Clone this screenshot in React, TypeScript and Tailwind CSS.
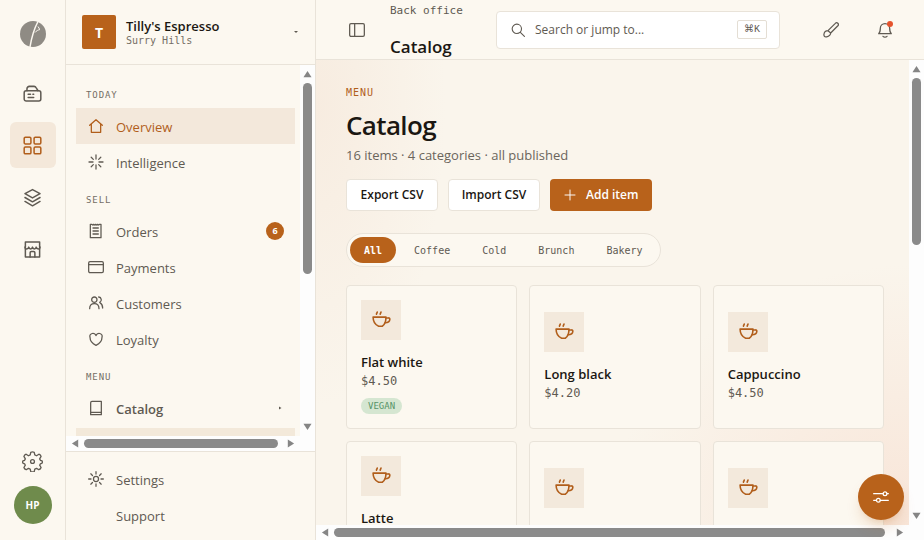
import { useState } from 'react';
import type { ReactNode } from 'react';

type IconProps = { children: ReactNode; className?: string };

function Icon({ children, className = 'size-4' }: IconProps) {
  return (
    <svg
      viewBox="0 0 24 24"
      fill="none"
      stroke="currentColor"
      strokeWidth="1.9"
      strokeLinecap="round"
      strokeLinejoin="round"
      aria-hidden="true"
      className={`shrink-0 ${className}`}
    >
      {children}
    </svg>
  );
}

const icons = {
  register: (
    <>
      <path d="M5 8.500V6a3 3 0 0 1 3-3h6a3 3 0 0 1 2.500 1.500l2.500 4" />
      <rect x="1.500" y="8.500" width="21" height="13" rx="2.500" />
      <path d="M6.500 13h3M6.500 17h7M12.500 13h1" />
    </>
  ),
  grid: (
    <>
      <rect x="1.500" y="1.500" width="8.500" height="8.500" rx="1.500" />
      <rect x="14" y="1.500" width="8.500" height="8.500" rx="1.500" />
      <rect x="1.500" y="14" width="8.500" height="8.500" rx="1.500" />
      <rect x="14" y="14" width="8.500" height="8.500" rx="1.500" />
    </>
  ),
  layers: (
    <>
      <path d="m12 2 9.500 5L12 12.500 2.500 7z" />
      <path d="m2.500 12 9.500 5.500 9.500-5.500" />
      <path d="m2.500 17 9.500 5.500 9.500-5.500" />
    </>
  ),
  store: (
    <>
      <path d="M3 11v10.500h18V11M3 2.500h18v7M3 2.500v7" />
      <path d="M2.500 9c0 3 4.300 3 4.800 0 .5 3 4.200 3 4.700 0 .5 3 4.200 3 4.700 0 .5 3 4.800 3 4.800 0M9 21.500V16a1.500 1.500 0 0 1 1.500-1.500h3A1.500 1.500 0 0 1 15 16v5.500" />
    </>
  ),
  gear: (
    <g strokeWidth="1.500">
      <path d="M10 1.500q2-.8 4 0l.6 3 2 .9 2.700-1.700q2 .7 2.500 2.500l-1.600 2.800.8 1.600 2 .8q.6 1.200 0 2.400l-2 .8-.8 1.600 1.600 2.700q-.6 1.900-2.500 2.500l-2.700-1.600-2 .8-.6 3q-2 .8-4 0l-.6-3-2-.8-2.700 1.600q-1.900-.6-2.500-2.500l1.600-2.700-.8-1.600-2-.8q-.6-1.200 0-2.400l2-.8.8-1.600-1.600-2.800q.6-1.900 2.500-2.500l2.700 1.700 2-.9z" />
      <circle cx="12" cy="12" r="2.200" />
    </g>
  ),
  home: <path d="M2.500 11 12 2.500l9.500 8.500M5 9v12.500h14V9" />,
  spark: <path d="M12 1.500v6M12 16.500v6M1.500 12h6M16.500 12h6M4.800 4.800l3.200 3.200M16 16l3.200 3.200M19.200 4.800 16 8M8 16l-3.200 3.200" />,
  receipt: (
    <>
      <path d="M3.500 2h2L7 3l1.500-1L10 3l1.500-1L13 3l1.500-1L16 3l1.500-1h2v20h-16z" />
      <path d="M7.500 7.500h8M7.500 12h8M7.500 16.500h8" />
    </>
  ),
  card: (
    <>
      <rect x="1" y="4" width="22" height="16.500" rx="2" />
      <path d="M1 8.500h22" />
    </>
  ),
  people: (
    <>
      <circle cx="9.500" cy="7" r="4" />
      <path d="M2.500 20.500c0-5 2.500-7.500 7-7.500s7 2.500 7 7.500M16 3a4.200 4.200 0 0 1 1.500 8c2.500 1.500 4.500 4.500 4.500 8.500" />
    </>
  ),
  heart: <path d="M12 21.500C5.500 18.500 3 14 3 9.500A4.500 4.500 0 0 1 12 7a4.500 4.500 0 0 1 9 2.500c0 4.500-2.500 9-9 12z" />,
  book: (
    <>
      <path d="M4 22V4a2 2 0 0 1 2-2h14v20H4z" />
      <path d="M4 18.500h16" />
    </>
  ),
  sun: (
    <>
      <circle cx="12" cy="12" r="3.800" />
      <path d="M12 1v3.500M12 19.500V23M1 12h3.500M19.500 12H23M4.200 4.200l2.500 2.500M17.300 17.300l2.500 2.500M19.800 4.200l-2.500 2.500M6.700 17.300l-2.500 2.500" />
    </>
  ),
  cup: (
    <>
      <path d="M2.500 8.500H18c0 5.500-1.800 9.500-4.500 11H9.200C5.500 18 2.500 14 2.500 8.500z" />
      <path d="M18 9.500h3a1.600 1.600 0 0 1 1.600 1.800c-.2 2.700-2 4-5.600 4M6.500 5l1-2.500M11 5l1-2.500" />
    </>
  ),
  panel: (
    <>
      <rect x="1" y="2.500" width="22" height="19" rx="2" />
      <path d="M8.500 2.500v19" />
    </>
  ),
  search: (
    <>
      <circle cx="10" cy="10" r="8" />
      <path d="m16 16 7 7" />
    </>
  ),
  brush: (
    <path d="M7.500 13 18.500 2a2.600 2.600 0 0 1 3.800 3.600L11.500 16.500M7.500 13l4 3.500M7.500 13c-3 0-5.500 2-6 5-.6 3 1 5 4 4.200 3.500-.8 5.800-3 6-5.700" />
  ),
  bell: (
    <>
      <path d="M2.500 17.500c2-1.500 2.500-3 2.500-8a7 7 0 0 1 14 0c0 5 .5 6.500 2.500 8z" />
      <path d="M9 21.500c1.500 1.600 4.500 1.600 6 0" />
    </>
  ),
  plus: <path d="M12 2v20M2 12h20" />,
  sliders: (
    <>
      <path d="M1 7h14M21 7h2M1 17h4M11 17h12" />
      <circle cx="18" cy="7" r="2.800" />
      <circle cx="8" cy="17" r="2.800" />
    </>
  ),
};

type IconName = keyof typeof icons;

const railItems: { label: string; icon: IconName; active?: boolean }[] = [
  { label: 'Register', icon: 'register' },
  { label: 'Back office', icon: 'grid', active: true },
  { label: 'Stock', icon: 'layers' },
  { label: 'Store', icon: 'store' },
];

const navGroups: { title: string; items: { label: string; icon: IconName; count?: number }[] }[] = [
  {
    title: 'TODAY',
    items: [
      { label: 'Overview', icon: 'home' },
      { label: 'Intelligence', icon: 'spark' },
    ],
  },
  {
    title: 'SELL',
    items: [
      { label: 'Orders', icon: 'receipt', count: 6 },
      { label: 'Payments', icon: 'card' },
      { label: 'Customers', icon: 'people' },
      { label: 'Loyalty', icon: 'heart' },
    ],
  },
  { title: 'MENU', items: [{ label: 'Catalog', icon: 'book' }] },
];

const categories = ['All', 'Coffee', 'Cold', 'Brunch', 'Bakery'];

const products = [
  { name: 'Flat white', price: '$4.50', tag: 'VEGAN' },
  { name: 'Long black', price: '$4.20' },
  { name: 'Cappuccino', price: '$4.50' },
  { name: 'Latte', price: '$4.80', tag: 'VEGAN' },
  { name: 'Piccolo', price: '$4.20' },
  { name: 'Mocha', price: '$5.20' },
];

const arrowPaths = {
  up: 'M5 1 9.500 8h-9z',
  down: 'M5 9 .5 2h9z',
  left: 'M1 5 8 .5v9z',
  right: 'M9 5 2 .5v9z',
};

function Arrow({ dir }: { dir: keyof typeof arrowPaths }) {
  return (
    <svg viewBox="0 0 10 10" className="size-[9px] shrink-0" aria-hidden="true">
      <path d={arrowPaths[dir]} fill="#858585" />
    </svg>
  );
}

// thumb is the share of the track that it covers, in percent
function Scrollbar({ vertical, thumb }: { vertical?: boolean; thumb: number }) {
  if (vertical) {
    return (
      <div className="flex w-[15px] shrink-0 flex-col items-center gap-1 bg-[#fdfdfd] pt-[5px] pb-5" aria-hidden="true">
        <Arrow dir="up" />
        <div className="min-h-0 w-[9px] flex-1">
          <div className="w-full rounded-full bg-[#8a8a8a]" style={{ height: `${thumb}%` }} />
        </div>
        <Arrow dir="down" />
      </div>
    );
  }
  return (
    <div className="flex h-[15px] shrink-0 items-center gap-1 bg-[#fdfdfd] px-[5px]" aria-hidden="true">
      <Arrow dir="left" />
      <div className="h-[9px] min-w-0 flex-1">
        <div className="h-full rounded-full bg-[#8a8a8a]" style={{ width: `${thumb}%` }} />
      </div>
      <Arrow dir="right" />
    </div>
  );
}

function Rail() {
  return (
    <aside className="flex w-[66px] shrink-0 flex-col items-center border-r border-[#e9e3d9] pt-5 pb-4">
      <a href="#home" aria-label="Home">
        <svg viewBox="0 0 28 28" className="size-7" aria-hidden="true">
          <circle cx="14" cy="14" r="13" fill="#8f8b84" />
          <path d="M11 27C12.500 18 15 9 19 1.500" stroke="#fcf8f0" strokeWidth="1.500" fill="none" />
          <path d="M16 12.500c1.500-1.800 3-2.500 5-3M19 6.500l1.500 2.500" stroke="#fcf8f0" strokeWidth="1" fill="none" />
        </svg>
      </a>
      <nav className="mt-[22px] flex flex-1 flex-col gap-1.5" aria-label="Apps">
        {railItems.map((item) => (
          <a
            key={item.label}
            href="#app"
            aria-label={item.label}
            className={
              item.active
                ? 'flex size-[46px] items-center justify-center rounded-md bg-[#f4e8da] text-[#b15e1b]'
                : 'flex size-[46px] items-center justify-center rounded-md text-[#5f5a52]'
            }
          >
            <Icon className="size-[19px]">{icons[item.icon]}</Icon>
          </a>
        ))}
      </nav>
      <button aria-label="Preferences" className="mb-3.5 text-[#5f5a52]">
        <Icon className="size-[21px]">{icons.gear}</Icon>
      </button>
      <button className="flex size-[38px] items-center justify-center rounded-full bg-[#6f8b4c] text-[10px] font-bold text-white">
        HP
      </button>
    </aside>
  );
}

function NavLink({ label, icon, count }: { label: string; icon?: IconName; count?: number }) {
  const active = label === 'Overview';
  const parent = label === 'Catalog';
  return (
    <a
      href="#nav"
      className={
        active
          ? 'flex h-9 items-center gap-3 bg-[#f3e8db] pr-[11px] pl-3 text-[#b15e1b]'
          : 'flex h-9 items-center gap-3 pr-[11px] pl-3 text-[#5f5a52]'
      }
    >
      {icon ? <Icon>{icons[icon]}</Icon> : <span className="w-4" />}
      <span className={parent ? 'flex-1 pt-1 font-semibold' : 'flex-1 pt-1'}>{label}</span>
      {count && (
        <span className="flex size-[18px] items-center justify-center rounded-full bg-[#b8621b] text-[9px] font-bold text-white">
          {count}
        </span>
      )}
      {parent && (
        <svg viewBox="0 0 6 6" className="size-1.5" aria-hidden="true">
          <path d="M1 1.500l2.500 1.500L1 4.500z" fill="#5f5a52" />
        </svg>
      )}
    </a>
  );
}

function Sidebar() {
  return (
    <aside className="flex w-[250px] shrink-0 flex-col border-r border-[#e9e3d9] text-[13px]">
      <button className="flex h-[65px] shrink-0 items-center gap-2.5 border-b border-[#e9e3d9] px-4 text-left">
        <span className="flex size-[34px] items-center justify-center rounded-xs bg-[#b8621b] text-[14px] font-bold text-white">
          T
        </span>
        <span className="flex flex-1 flex-col">
          <span className="leading-[18px] font-semibold text-[#1b1712]">Tilly's Espresso</span>
          <span className="font-['DejaVu_Sans_Mono',monospace] text-[10px] leading-3 text-[#746e65]">Surry Hills</span>
        </span>
        <svg viewBox="0 0 6 6" className="size-1.5" aria-hidden="true">
          <path d="M1 2h4l-2 2z" fill="#5f5a52" />
        </svg>
      </button>
      <div className="flex min-h-0 flex-1">
        <div className="flex min-w-0 flex-1 flex-col">
          <nav className="min-h-0 flex-1 overflow-hidden pt-2.5 pr-[5px] pl-2.5" aria-label="Back office">
            {navGroups.map((group) => (
              <div key={group.title}>
                <h2 className="px-2.5 pt-[13px] pb-1.5 font-['DejaVu_Sans_Mono',monospace] text-[9px] leading-[14px] tracking-widest text-[#746e65]">
                  {group.title}
                </h2>
                {group.items.map((item) => (
                  <NavLink key={item.label} {...item} />
                ))}
              </div>
            ))}
            <a href="#items" aria-label="Items" className="mt-0.5 block h-9 bg-[#f3e9da]" />
          </nav>
          <Scrollbar thumb={98} />
        </div>
        <Scrollbar vertical thumb={57} />
      </div>
      <div className="flex shrink-0 flex-col border-t border-[#e9e3d9] px-2.5 pt-[9px] pb-[7px]">
        <NavLink label="Settings" icon="sun" />
        <NavLink label="Support" />
      </div>
    </aside>
  );
}

function TopBar() {
  return (
    <header className="flex h-[60px] shrink-0 items-center border-b border-[#e9e3d9] bg-[#fcf8f0] pr-[31px] pl-[33px] text-[#5f5a52]">
      <button aria-label="Toggle sidebar" className="mr-[25px]">
        <Icon>{icons.panel}</Icon>
      </button>
      <div className="flex w-[106px] shrink-0 flex-col gap-3.5">
        <span className="font-['DejaVu_Sans_Mono',monospace] text-[11px] leading-5">Back office</span>
        <span className="text-[17px] leading-6 font-semibold text-[#1b1712]">Catalog</span>
      </div>
      <label className="flex h-[38px] max-w-[284px] flex-1 items-center gap-2.5 rounded-sm border border-[#e9e3d9] bg-white pr-3 pl-3.5">
        <Icon className="size-3.5">{icons.search}</Icon>
        <input
          type="search"
          aria-label="Search"
          placeholder="Search or jump to..."
          className="min-w-0 flex-1 bg-transparent text-[12px] outline-none placeholder:text-[#5f5a52]"
        />
        <kbd className="flex h-[19px] w-[30px] items-center justify-center rounded-xs border border-[#e4ded4] font-['Liberation_Mono','DejaVu_Sans',monospace] text-[10px]">
          ⌘K
        </kbd>
      </label>
      <div className="ml-auto flex items-center gap-[38px]">
        <button aria-label="Theme">
          <Icon>{icons.brush}</Icon>
        </button>
        <button aria-label="Notifications" className="relative">
          <Icon>{icons.bell}</Icon>
          <span className="absolute -top-px right-0 size-1.5 rounded-full bg-[#e5532d]" />
        </button>
      </div>
    </header>
  );
}

function Catalog() {
  const [category, setCategory] = useState('All');

  return (
    <main className="min-h-0 flex-1 overflow-hidden bg-[#faf5ec] bg-[radial-gradient(ellipse_130px_300px_at_0%_10%,#f7ece0,transparent),radial-gradient(ellipse_300px_260px_at_100%_100%,#f8e5d8,transparent)] pt-[25px] pr-[25px] pl-[30px]">
      <p className="font-['DejaVu_Sans_Mono',monospace] text-[10px] leading-4 tracking-widest text-[#b15e1b]">MENU</p>
      <h1 className="mt-1.5 text-[26px] leading-9 font-semibold tracking-tight text-[#1b1712]">Catalog</h1>
      <p className="mt-0.5 text-[13px] leading-5 text-[#6b655c]">16 items · 4 categories · all published</p>
      <div className="mt-3.5 flex gap-2.5 text-[12px] font-semibold">
        <button className="h-8 w-23 rounded-sm border border-[#e9e3d9] bg-white text-[#1b1712]">Export CSV</button>
        <button className="h-8 w-23 rounded-sm border border-[#e9e3d9] bg-white text-[#1b1712]">Import CSV</button>
        <button className="flex h-8 items-center gap-2.5 rounded-sm bg-[#b8621b] px-3.5 text-white">
          <Icon className="size-3">{icons.plus}</Icon>
          Add item
        </button>
      </div>
      <div className="mt-[22px] flex w-fit gap-1 rounded-full border border-[#e9e3d9] bg-[#fcf8f0] p-[3px] font-['DejaVu_Sans_Mono',monospace] text-[10px]">
        {categories.map((name) => (
          <button
            key={name}
            onClick={() => setCategory(name)}
            className={
              name === category
                ? 'h-[26px] rounded-full bg-[#b8621b] px-3.5 font-bold text-white'
                : 'h-[26px] rounded-full px-3.5 text-[#5f5a52]'
            }
          >
            {name}
          </button>
        ))}
      </div>
      <div className="mt-[18px] grid grid-cols-3 gap-3">
        {products.map((product) => (
          <button
            key={product.name}
            className="flex h-36 flex-col items-start justify-center rounded-sm border border-[#e9e3d9] bg-[#fcf8f0] px-3.5 text-left"
          >
            <span className="mb-3 flex size-10 shrink-0 items-center justify-center bg-[#f3e9dc] text-[#b15e1b]">
              <Icon className="size-5">{icons.cup}</Icon>
            </span>
            <span className="text-[13px] leading-5 font-semibold text-[#1b1712]">{product.name}</span>
            <span className="font-['DejaVu_Sans_Mono',monospace] text-[12px] leading-[18px] text-[#5f5a52]">{product.price}</span>
            {product.tag && (
              <span className="mt-2 rounded-full bg-[#d5e6d1] px-[7px] font-['DejaVu_Sans_Mono',monospace] text-[9px] leading-4 text-[#579468]">
                {product.tag}
              </span>
            )}
          </button>
        ))}
      </div>
    </main>
  );
}

export default function App() {
  return (
    <div className="flex h-screen overflow-hidden bg-[#fcf8f0] font-['Open_Sans','Noto_Sans',sans-serif]">
      <Rail />
      <Sidebar />
      <div className="flex min-w-0 flex-1 flex-col">
        <TopBar />
        <div className="flex min-h-0 flex-1">
          <div className="flex min-w-0 flex-1 flex-col">
            <Catalog />
            <Scrollbar thumb={99} />
          </div>
          <Scrollbar vertical thumb={39} />
        </div>
      </div>
      <button
        aria-label="Adjust"
        className="absolute right-5 bottom-5 flex size-[46px] items-center justify-center rounded-full bg-[#b8621b] text-white shadow-lg shadow-[#b8621b]/20"
      >
        <Icon>{icons.sliders}</Icon>
      </button>
    </div>
  );
}
